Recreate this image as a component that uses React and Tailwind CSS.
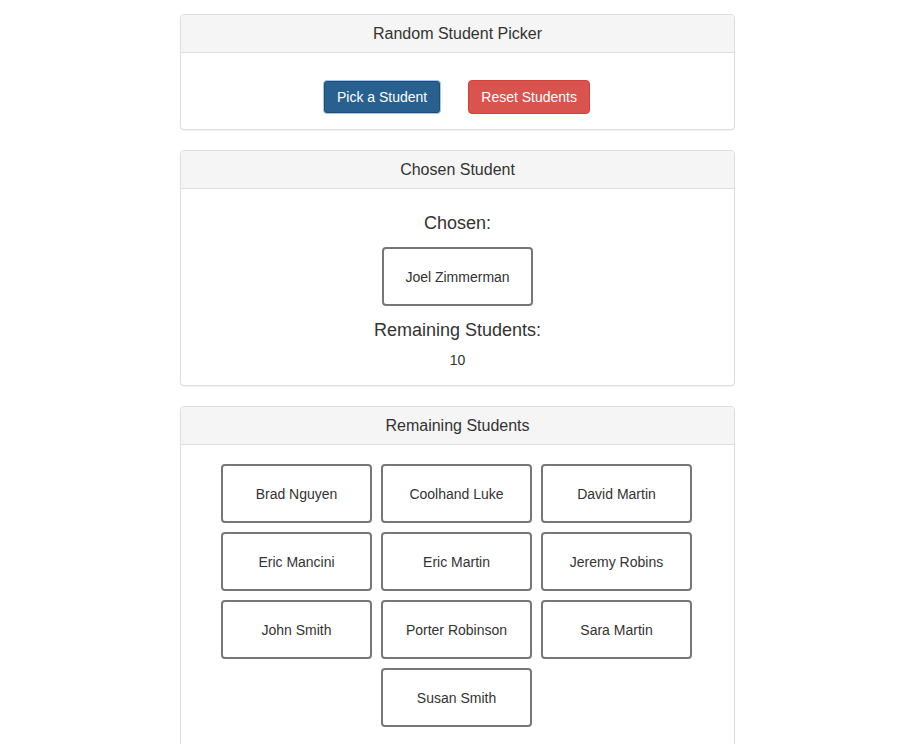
import React from 'react';

const students = [
  'Brad Nguyen', 'Coolhand Luke', 'David Martin',
  'Eric Mancini', 'Eric Martin', 'Jeremy Robins',
  'John Smith', 'Porter Robinson', 'Sara Martin',
  'Susan Smith',
];

function Panel({ title, children, bodyClass }) {
  return (
    <div className="mb-5 rounded border border-[#ddd] bg-white shadow-[0_1px_1px_rgba(0,0,0,0.05)]">
      <div className="h-[38px] flex items-center justify-center border-b border-[#ddd] bg-[#f5f5f5] text-base text-[#333] rounded-t">
        {title}
      </div>
      <div className={bodyClass}>{children}</div>
    </div>
  );
}

function StudentBox({ name }) {
  return (
    <div className="w-[151px] h-[59px] flex items-center justify-center border-2 border-[#777] rounded text-sm text-[#333]">
      {name}
    </div>
  );
}

export default function App() {
  return (
    <div className="min-h-screen bg-white pt-[14px] font-['Liberation_Sans',Arial,sans-serif] text-[#333]">
      <div className="ml-[180px] w-[555px]">
        <Panel title="Random Student Picker" bodyClass="h-[76px] flex items-center justify-center gap-[27px] pt-[11px] pr-[2px]">
          <button
            type="button"
            className="h-[34px] px-[13px] rounded border border-[#a6c8ee] bg-[#286090] text-white text-sm shadow-[inset_0_0_0_1px_#204d74]"
          >
            Pick a Student
          </button>
          <button
            type="button"
            className="h-[34px] px-3 rounded border border-[#d43f3a] bg-[#d9534f] text-white text-sm"
          >
            Reset Students
          </button>
        </Panel>

        <Panel title="Chosen Student" bodyClass="flex flex-col items-center pt-[21px] pb-[15px]">
          <div className="text-lg leading-[26px]">Chosen:</div>
          <div className="mt-[11px]">
            <StudentBox name="Joel Zimmerman" />
          </div>
          <div className="mt-[11px] text-lg leading-[26px]">Remaining Students:</div>
          <div className="mt-[7px] text-sm leading-5">10</div>
        </Panel>

        <Panel title="Remaining Students" bodyClass="pt-[19px] pb-8">
          <div className="mx-auto w-[475px] flex flex-wrap justify-center gap-x-[9px] gap-y-[9px] -translate-x-px">
            {students.map(s => (
              <StudentBox key={s} name={s} />
            ))}
          </div>
        </Panel>
      </div>
    </div>
  );
}
